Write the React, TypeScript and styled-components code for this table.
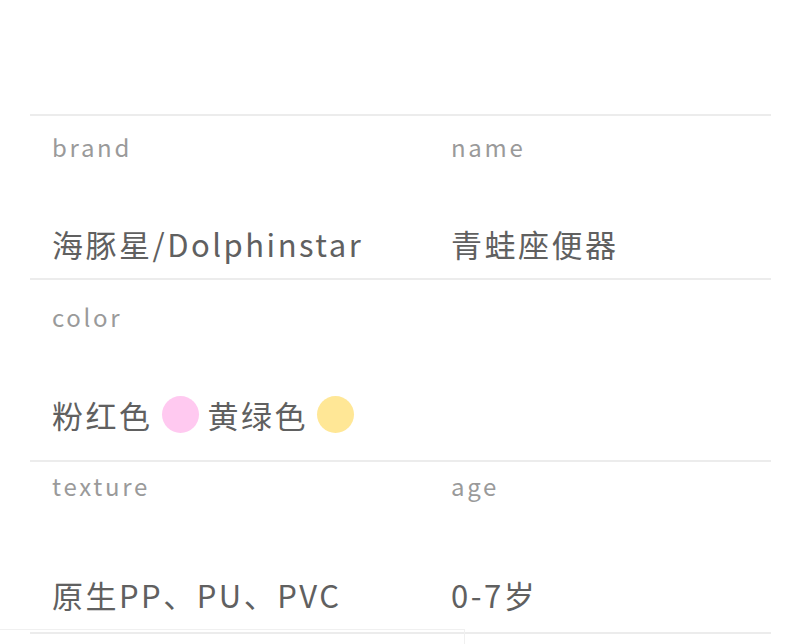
import React from 'react';
import styled, { createGlobalStyle } from 'styled-components';

const GlobalStyle = createGlobalStyle`
  html, body {
    margin: 0;
    padding: 0;
    background: #ffffff;
  }
  body {
    font-family: 'Noto Sans CJK SC', 'Noto Sans', sans-serif;
    width: 790px;
    height: 644px;
    overflow: hidden;
  }
`;

const Page = styled.div`
  padding-top: 114px;
`;

const Table = styled.div`
  margin-left: 30px;
  width: 741px;
  border-bottom: 2px solid #ececec;
`;

const Row = styled.div<{ $top: number; $gap: number; $bottom: number }>`
  display: grid;
  grid-template-columns: 399px 1fr;
  border-top: 2px solid #ececec;
  padding-top: ${(p) => p.$top}px;
  padding-bottom: ${(p) => p.$bottom}px;
  --gap: ${(p) => p.$gap}px;
`;

const Cell = styled.div`
  display: flex;
  flex-direction: column;
  padding-left: 22px;
  gap: var(--gap);
`;

const Label = styled.div`
  font-size: 24px;
  line-height: 36px;
  letter-spacing: 2.7px;
  color: #9a9a9a;
`;

const Value = styled.div`
  display: flex;
  align-items: center;
  gap: 9px;
  font-size: 31px;
  line-height: 45px;
  letter-spacing: 2.5px;
  color: #606060;
  white-space: nowrap;
`;

const Dot = styled.span<{ $color: string }>`
  width: 37px;
  height: 37px;
  border-radius: 50%;
  background: ${(p) => p.$color};
  flex-shrink: 0;
`;

const Frame = styled.div`
  margin-top: -5px;
  width: 464px;
  height: 20px;
  border-top: 1px solid #f0f0f0;
  border-right: 1px solid #f0f0f0;
`;

export default function App() {
  return (
    <>
      <GlobalStyle />
      <Page>
        <Table>
          <Row $top={13} $gap={56} $bottom={12}>
            <Cell>
              <Label>brand</Label>
              <Value>海豚星/Dolphinstar</Value>
            </Cell>
            <Cell>
              <Label>name</Label>
              <Value>青蛙座便器</Value>
            </Cell>
          </Row>
          <Row $top={19} $gap={57} $bottom={23}>
            <Cell>
              <Label>color</Label>
              <Value>
                粉红色
                <Dot $color="#ffc9f0" />
                黄绿色
                <Dot $color="#ffe796" />
              </Value>
            </Cell>
          </Row>
          <Row $top={6} $gap={68} $bottom={15}>
            <Cell>
              <Label>texture</Label>
              <Value>原生PP、PU、PVC</Value>
            </Cell>
            <Cell>
              <Label>age</Label>
              <Value>0-7岁</Value>
            </Cell>
          </Row>
        </Table>
        <Frame />
      </Page>
    </>
  );
}
